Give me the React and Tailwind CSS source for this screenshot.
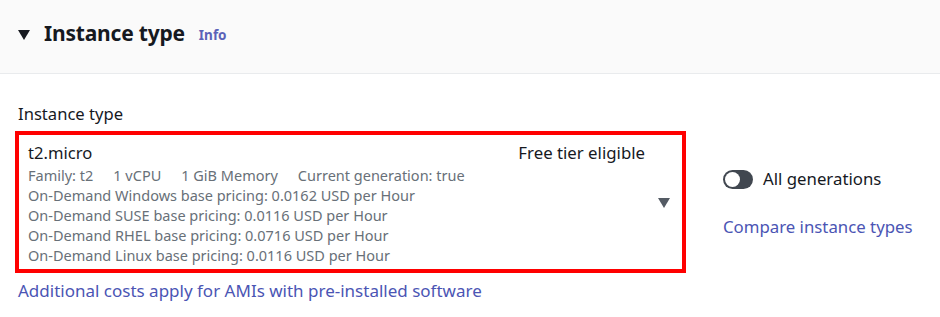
import React from 'react';

const pricing = [
  'On-Demand Windows base pricing: 0.0162 USD per Hour',
  'On-Demand SUSE base pricing: 0.0116 USD per Hour',
  'On-Demand RHEL base pricing: 0.0716 USD per Hour',
  'On-Demand Linux base pricing: 0.0116 USD per Hour',
];

const App = () => {
  return (
    <div className="w-[940px] h-[317px] bg-white overflow-hidden font-['Noto_Sans',sans-serif] text-[#16191f]">
      {/* Header */}
      <div className="h-[74px] bg-[#fafafa] border-b border-[#e9ebed] flex items-center pl-[18px]">
        <svg width="12" height="10" viewBox="0 0 12 10" className="mr-[14px] mt-[-4px]">
          <path d="M0 0 H12 L6 10 Z" fill="#16191f" />
        </svg>
        <h2 className="text-[21px] font-bold tracking-[-0.2px] leading-none mt-[-6px]">Instance type</h2>
        <span className="ml-[14px] text-[13.5px] font-bold text-[#5a62b8] mt-[-2px]">Info</span>
      </div>

      {/* Body */}
      <div className="pl-[15px] pt-[30px] flex">
        <div className="flex flex-col">
          <label className="pl-[3px] text-[16.6px] leading-[20px] mb-[7px]">Instance type</label>
          <div className="w-[671px] h-[142px] border-4 border-[#ff0000] flex pl-[9px] pr-[12px] pt-[7px]">
            <div className="flex-1 flex flex-col">
              <div className="text-[16.6px] leading-[22px]">t2.micro</div>
              <div className="text-[14.5px] leading-[20px] text-[#687078] flex gap-[20px] mt-[1px]">
                <span>Family: t2</span>
                <span>1 vCPU</span>
                <span>1 GiB Memory</span>
                <span>Current generation: true</span>
              </div>
              {pricing.map((p) => (
                <div key={p} className="text-[14.5px] leading-[20px] text-[#687078]">{p}</div>
              ))}
            </div>
            <div className="flex flex-col items-end">
              <div className="text-[16.8px] leading-[22px] mr-[25px]">Free tier eligible</div>
              <svg width="12" height="10" viewBox="0 0 12 10" className="mt-[34px]">
                <path d="M0 0 H12 L6 10 Z" fill="#545b64" />
              </svg>
            </div>
          </div>
          <a className="pl-[3px] mt-[7px] text-[17px] leading-[22px] text-[#4b55b4]">
            Additional costs apply for AMIs with pre-installed software
          </a>
        </div>

        <div className="ml-[37px] pt-[64px] flex flex-col">
          <div className="flex items-center gap-[10px]">
            <div className="w-[30px] h-[19px] rounded-full bg-[#414750] flex items-center pl-[2px]">
              <div className="w-[15px] h-[15px] rounded-full bg-white"></div>
            </div>
            <span className="text-[16.8px] leading-[22px]">All generations</span>
          </div>
          <a className="mt-[26px] text-[16.8px] leading-[22px] text-[#4b55b4]">Compare instance types</a>
        </div>
      </div>
    </div>
  );
};

export default App;
